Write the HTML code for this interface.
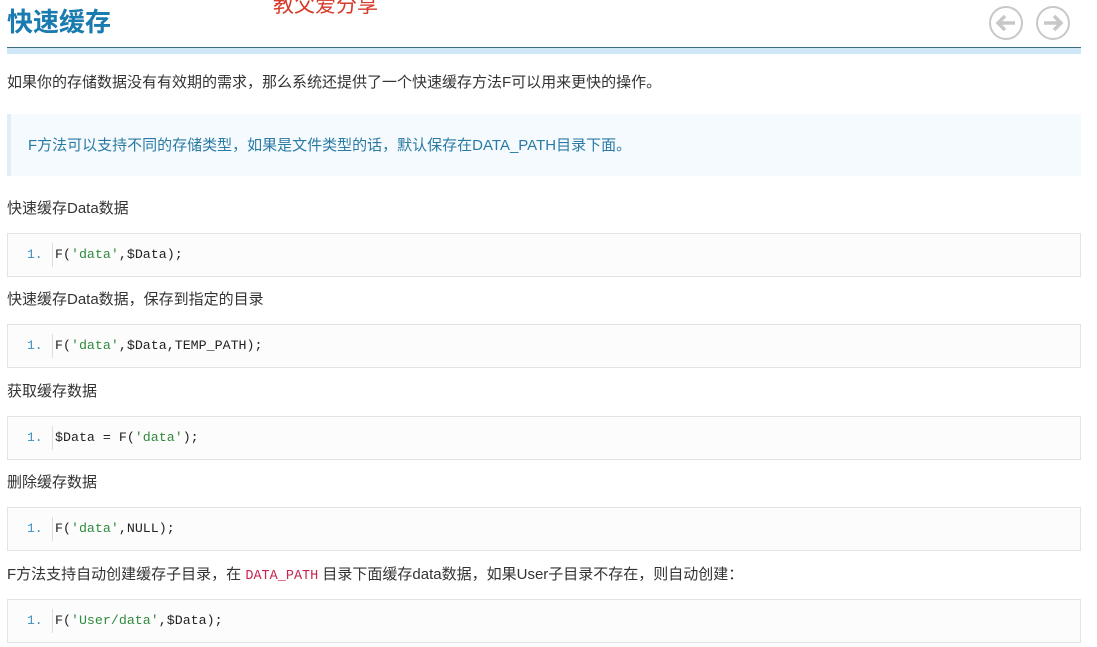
<!DOCTYPE html>
<html><head><meta charset="utf-8"><style>
body{margin:0;width:1097px;height:647px;background:#fff;position:relative;overflow:hidden;font-family:"Liberation Sans","Noto Sans CJK SC",sans-serif;color:#333}
.a{position:absolute;white-space:nowrap}
.t{font-size:15px;line-height:17px}
.code{position:absolute;left:7px;width:1072px;height:42px;border:1px solid #e3e3e3;background:#fcfcfc}
.code .n{position:absolute;left:19px;top:13px;font:13px "Liberation Mono",monospace;color:#3b8fc0}
.code .s{position:absolute;left:44px;top:9px;height:24px;border-left:1px solid #ddd}
.code .c{position:absolute;left:47px;top:13px;font:13.3px "Liberation Mono",monospace;color:#222}
.g{color:#2e8a3e}
</style></head><body>
<div class="a" style="left:7px;top:6px;font-size:26px;font-weight:bold;color:#1a7bb0;line-height:32px">快速缓存</div>
<div class="a" style="left:273px;top:-6px;font-size:21px;color:#d63a2a;line-height:24px">教父爱分享</div>
<svg class="a" style="left:988px;top:5px" width="84" height="36" viewBox="0 0 84 36">
<g fill="none" stroke="#c8c8c8" stroke-width="2"><circle cx="18" cy="18" r="16"/><circle cx="65" cy="18" r="16"/>
<path d="M27 18H10M17 11l-7 7 7 7" stroke-width="3.5"/><path d="M56 18h17M66 11l7 7-7 7" stroke-width="3.5"/></g></svg>
<div class="a" style="left:7px;top:47px;width:1074px;height:1px;background:#3b6e80"></div>
<div class="a" style="left:7px;top:48px;width:1074px;height:6px;background:#cfe8f8"></div>
<div class="a t" style="left:7px;top:74px">如果你的存储数据没有有效期的需求，那么系统还提供了一个快速缓存方法F可以用来更快的操作。</div>
<div class="a" style="left:7px;top:114px;width:1074px;height:62px;background:#f4fafd;border-left:4px solid #e2eef5;box-sizing:border-box"></div>
<div class="a t" style="left:28px;top:137px;color:#2a7aa3">F方法可以支持不同的存储类型，如果是文件类型的话，默认保存在DATA_PATH目录下面。</div>
<div class="a t" style="left:7px;top:200px">快速缓存Data数据</div>
<div class="code" style="top:233px"><span class="n">1.</span><span class="s"></span><span class="c">F(<span class="g">'data'</span>,$Data);</span></div>
<div class="a t" style="left:7px;top:291px">快速缓存Data数据，保存到指定的目录</div>
<div class="code" style="top:324px"><span class="n">1.</span><span class="s"></span><span class="c">F(<span class="g">'data'</span>,$Data,TEMP_PATH);</span></div>
<div class="a t" style="left:7px;top:383px">获取缓存数据</div>
<div class="code" style="top:416px"><span class="n">1.</span><span class="s"></span><span class="c">$Data = F(<span class="g">'data'</span>);</span></div>
<div class="a t" style="left:7px;top:474px">删除缓存数据</div>
<div class="code" style="top:507px"><span class="n">1.</span><span class="s"></span><span class="c">F(<span class="g">'data'</span>,NULL);</span></div>
<div class="a t" style="left:7px;top:566px">F方法支持自动创建缓存子目录，在 <span style="font:13.5px 'Liberation Mono',monospace;color:#c7254e">DATA_PATH</span> 目录下面缓存data数据，如果User子目录不存在，则自动创建：</div>
<div class="code" style="top:599px"><span class="n">1.</span><span class="s"></span><span class="c">F(<span class="g">'User/data'</span>,$Data);</span></div>
</body></html>
